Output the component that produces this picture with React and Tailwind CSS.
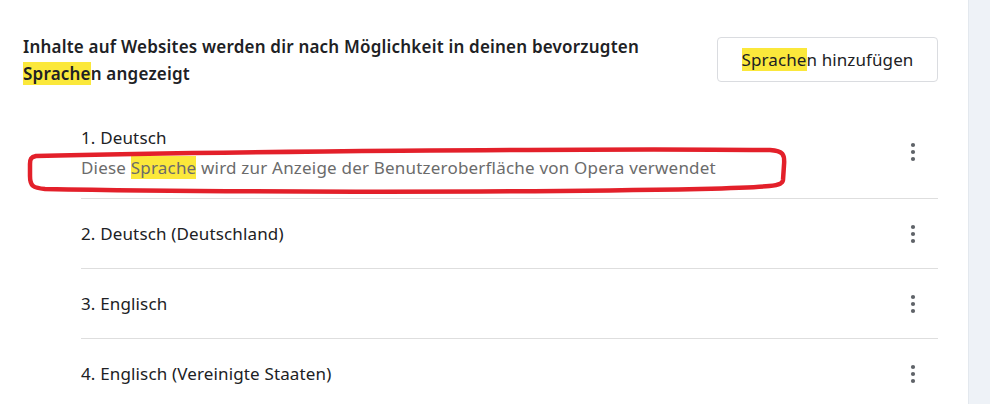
import React from "react";

const HL = ({ children }) => <span className="bg-[#fbe83b]">{children}</span>;

const Kebab = () => (
  <svg width="6" height="20" viewBox="0 0 6 20" className="text-[#5f6368]">
    <circle cx="3" cy="3" r="2.1" fill="currentColor" />
    <circle cx="3" cy="10" r="2.1" fill="currentColor" />
    <circle cx="3" cy="17" r="2.1" fill="currentColor" />
  </svg>
);

const rows = ["2. Deutsch (Deutschland)", "3. Englisch", "4. Englisch (Vereinigte Staaten)"];

export default function App() {
  return (
    <div
      className="flex h-[404px] w-[990px] overflow-hidden bg-white text-[#202124]"
      style={{ fontFamily: '"Noto Sans", "Open Sans", sans-serif' }}
    >
      <div className="relative flex-1 pl-[23px] pr-[30px] pt-[33px]">
        <div className="flex items-start justify-between">
          <div className="text-[17px] font-semibold leading-[27px] tracking-[0.2px]">
            Inhalte auf Websites werden dir nach Möglichkeit in deinen bevorzugten
            <br />
            <HL>Sprache</HL>n angezeigt
          </div>
          <button className="mt-[4px] flex h-[45px] w-[221px] items-center justify-center rounded-[4px] border border-[#dadce0] bg-white text-[17px] tracking-[0.1px]">
            <span>
              <HL>Sprache</HL>n hinzufügen
            </span>
          </button>
        </div>

        <div className="ml-[58px] mt-[26px]">
          <div className="flex h-[86px] items-center justify-between border-b border-[#dedede]">
            <div className="-mt-[1px]">
              <div className="text-[17px] leading-[24px] tracking-[0.15px]">1. Deutsch</div>
              <div className="mt-[2px] text-[17px] leading-[32px] tracking-[0.2px] text-[#6b6b6b]">
                Diese <HL>Sprache</HL> wird zur Anzeige der Benutzeroberfläche von Opera verwendet
              </div>
            </div>
            <div className="mr-[22px] -mt-[8px]">
              <Kebab />
            </div>
          </div>
          {rows.map((r, i) => (
            <div
              key={r}
              className={`flex h-[70px] items-center justify-between ${i < rows.length - 1 ? "border-b border-[#dedede]" : ""}`}
            >
              <div className="text-[17px] tracking-[0.15px]">{r}</div>
              <div className="mr-[22px]">
                <Kebab />
              </div>
            </div>
          ))}
        </div>

        <svg
          className="pointer-events-none absolute left-0 top-0"
          width="968"
          height="404"
          viewBox="0 0 968 404"
        >
          <path
            d="M36 156 C 200 152, 600 148, 770 150 C 783 151, 785 154, 784 165 L 783 180 C 782 186, 775 187, 700 189 C 500 193, 200 192, 45 189 C 33 188, 30 186, 30 176 L 30 164 C 30 159, 31 157, 36 156 Z"
            fill="none"
            stroke="#e3202a"
            strokeWidth="4.5"
          />
        </svg>
      </div>
      <div className="w-[22px] border-l border-[#e3e8ee] bg-[#eef2f7]" />
    </div>
  );
}
